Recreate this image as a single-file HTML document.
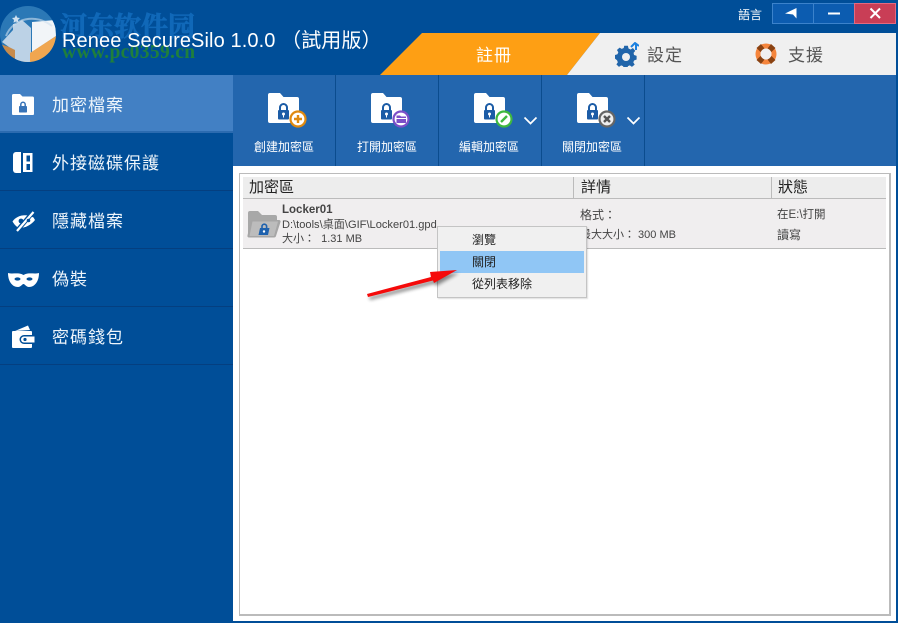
<!DOCTYPE html>
<html><head><meta charset="utf-8">
<style>
html,body{margin:0;padding:0}
body{width:898px;height:623px;overflow:hidden;background:#004e98;position:relative;font-family:"Liberation Sans","Noto Sans CJK TC",sans-serif;}
.a{position:absolute;white-space:nowrap}
.nav{position:absolute;left:0;width:233px;height:57px;border-bottom:1px solid #043f80;color:#fff;}
.nav span{position:absolute;left:52px;top:20px;font-size:17px;line-height:22px;letter-spacing:1px;color:#eef5fb}
.tb{position:absolute;top:139px;font-size:12px;line-height:16px;color:#fff;width:102px;text-align:center}
.sep{position:absolute;top:75px;width:1px;height:91px;background:#0b4c8e}
.t{position:absolute;color:#333;font-size:12px;line-height:14px;white-space:nowrap}
.h{position:absolute;color:#222;font-size:15px;line-height:18px;top:179px}
.m{position:absolute;left:472px;font-size:12px;line-height:16px;color:#222}
</style></head>
<body>
<svg width="0" height="0" style="position:absolute"><defs>
<symbol id="fold" viewBox="0 0 32 32"><path d="M0 2a2 2 0 0 1 2-2h10l3.500 4H29a2 2 0 0 1 2 2v22a2 2 0 0 1-2 2H2a2 2 0 0 1-2-2z" fill="#fff"/><rect x="10" y="17" width="11" height="9.500" rx="1" fill="#1c5ca6"/><path d="M12 18v-3.500a3.500 3.500 0 0 1 7 0V18" fill="none" stroke="#1c5ca6" stroke-width="2"/><circle cx="15.500" cy="21" r="1.500" fill="#fff"/><rect x="15" y="21" width="1" height="3.500" fill="#fff"/></symbol>
<clipPath id="cc"><circle cx="28" cy="34" r="28"/></clipPath>
</defs></svg>

<!-- title bar -->
<svg class="a" style="left:0;top:0" width="898" height="75">
<g clip-path="url(#cc)">
<rect x="0" y="6" width="56" height="56" fill="#2b78b6"/>
<path d="M0 44 L30 54 L30 62 L0 62Z" fill="#c78b4c"/>
<path d="M2 42 L13 30 L13 24 L16 24 L22 20 L31 28 L31 62 L15 62 L15 50 L9 47Z" fill="#bcd2e6"/>
<path d="M32 22 L55 20 L56 36 L32 52Z" fill="#f2f5f8"/>
<path d="M30 53 L56 36 L56 50 L46 62 L30 62Z" fill="#f0a650"/>
<path d="M6 36 C13 18 36 13 52 26" stroke="#cfe0ef" stroke-width="2" fill="none" opacity=".6"/>
<path d="M16 15l1.300 2.600 2.700.4-2 2 .5 2.800-2.500-1.300-2.500 1.300.5-2.800-2-2 2.700-.4z" fill="#cfe0ef"/>
</g>
<path d="M380 75 L422 33 L600 33 L567 75Z" fill="#fe9f14"/>
<path d="M600 33 L896 33 L896 75 L567 75Z" fill="#f0f0f0"/>
</svg>

<div class="a" style="left:60px;top:9px;font:bold 27px/32px 'Noto Serif CJK SC','Liberation Serif',serif;color:#1068b8;-webkit-text-stroke:.7px #1068b8">河东软件园</div>
<div class="a" style="left:62px;top:42px;font:bold 19.500px/22px 'Liberation Serif',serif;color:#1f7f3c;letter-spacing:.35px">www.pc0359.cn</div>
<div class="a" style="left:62px;top:29px;font-size:20px;line-height:24px;color:#fff;letter-spacing:.1px">Renee SecureSilo 1.0.0 （試用版）</div>

<div class="a" style="left:738px;top:7px;font-size:12px;line-height:16px;color:#fff">語言</div>
<svg class="a" style="left:772px;top:3px" width="125" height="21">
<rect x=".5" y=".5" width="41" height="20" fill="#0c5cb0" stroke="#3b82cb"/>
<rect x="41.500" y=".5" width="41" height="20" fill="#0c5cb0" stroke="#3b82cb"/>
<rect x="82.500" y=".5" width="41" height="20" fill="#c93e56" stroke="#e4697f"/>
<path d="M13 10.500 L24.500 5 L24.500 15.500 L21 11.500Z" fill="#fff"/>
<rect x="56" y="9.500" width="12" height="2" fill="#fff"/>
<path d="M98.500 5.500 L108 15 M108 5.500 L98.500 15" stroke="#fff" stroke-width="2"/>
</svg>

<div class="a" style="left:476px;top:45px;font-size:17px;line-height:22px;color:#fff;letter-spacing:1px">註冊</div>
<svg class="a" style="left:615px;top:42px" width="24" height="25" viewBox="0 0 24 25">
<path d="M10 3h4l.7 3 2.300 1 2.500-1.500 2.500 3-1.800 2.300.5 2.200 2.800 1v4l-2.800 1-.8 2 1.500 2.500-3 2.500-2.300-1.700-2.100.8-.5 2.900H9.500l-.7-2.900-2.100-.8-2.400 1.700-2.800-2.800 1.600-2.300-.9-2.100L0 17v-4l2.700-.8.900-2.200-1.500-2.400L5 5l2.300 1.400L9.500 5.500z" fill="#2165aa" transform="translate(0 1) scale(.92)"/>
<circle cx="11" cy="15" r="4" fill="#f0f0f0"/>
<path d="M16 5 L20 1 L24 4 M21 2 L21 8" stroke="#1a80e0" stroke-width="2" fill="none"/>
</svg>
<div class="a" style="left:647px;top:45px;font-size:17px;line-height:22px;color:#555;letter-spacing:1px">設定</div>
<svg class="a" style="left:755px;top:43px" width="22" height="22" viewBox="0 0 22 22">
<circle cx="11" cy="11" r="8" fill="none" stroke="#f5853c" stroke-width="5"/>
<g fill="#8a4212"><path d="M1.500 5 L6 1 L9.500 5.500 L5.500 9Z"/><path d="M20.500 5 L16 1 L12.500 5.500 L16.500 9Z"/><path d="M1.500 17 L6 21 L9.500 16.500 L5.500 13Z"/><path d="M20.500 17 L16 21 L12.500 16.500 L16.500 13Z"/></g>
<circle cx="11" cy="11" r="5.500" fill="#f0f0f0"/>
</svg>
<div class="a" style="left:788px;top:45px;font-size:17px;line-height:22px;color:#555;letter-spacing:1px">支援</div>

<!-- sidebar -->
<div class="nav" style="top:75px;background:#4280c4;border-bottom:2px solid #2b6bb0;height:56px"><span>加密檔案</span></div>
<div class="nav" style="top:133px"><span>外接磁碟保護</span></div>
<div class="nav" style="top:191px"><span>隱藏檔案</span></div>
<div class="nav" style="top:249px"><span>偽裝</span></div>
<div class="nav" style="top:307px"><span>密碼錢包</span></div>

<svg class="a" style="left:10px;top:90px" width="26" height="26" viewBox="0 0 26 26">
<path d="M2 5.500A1.500 1.500 0 0 1 3.500 4H10l2.500 2.500H22.500A1.500 1.500 0 0 1 24 8v16a1 1 0 0 1-1 1H3a1 1 0 0 1-1-1z" fill="#fff"/>
<rect x="9" y="16" width="8" height="6.500" rx=".8" fill="#3874b8"/>
<path d="M10.800 17v-2.500a2.200 2.200 0 0 1 4.400 0V17" fill="none" stroke="#3874b8" stroke-width="1.500"/>
</svg>
<svg class="a" style="left:12px;top:150px" width="22" height="24" viewBox="0 0 22 24">
<path d="M1 5a3 3 0 0 1 3-3h5v21H4a3 3 0 0 1-3-3z" fill="#fff"/>
<path d="M11 3h9.500v19H11zM14.500 5.500v6h3.500v-6zM14.500 14v6h3.500v-6z" fill="#fff" fill-rule="evenodd"/>
</svg>
<svg class="a" style="left:11px;top:210px" width="25" height="22" viewBox="0 0 25 22">
<path d="M1.500 11.500 C6 5 15 3.500 22.500 7.500 L24 10 C20 15.500 12 19 7 17.500 C4.500 16 3 14 1.500 11.500Z" fill="#fff"/>
<path d="M5 22 L23 1" stroke="#004e98" stroke-width="4.500"/>
<path d="M6 21 L22.500 2" stroke="#fff" stroke-width="2.200"/>
<circle cx="10" cy="11" r="2.400" fill="#004e98"/>
<circle cx="17.500" cy="10.500" r="1.800" fill="#004e98"/>
</svg>
<svg class="a" style="left:8px;top:272px" width="31" height="15" viewBox="0 0 31 15">
<path d="M0 1 C5 2.500 10 0 15.500 3 C21 0 26 2.500 31 1 C31 9 27 15 21 15 C18 15 17 12 15.500 12 C14 12 13 15 10 15 C4 15 0 9 0 1Z" fill="#fff"/>
<ellipse cx="9.500" cy="7" rx="3" ry="1.600" fill="#004e98"/><ellipse cx="21.500" cy="7" rx="3" ry="1.600" fill="#004e98"/>
</svg>
<svg class="a" style="left:12px;top:325px" width="23" height="23" viewBox="0 0 23 23">
<path d="M3 6 L16 .5 L18 5Z" fill="#fff"/>
<path d="M0 7a1 1 0 0 1 1-1h18a1 1 0 0 1 1 1v3H12a4.500 4.500 0 0 0 0 9h8v3a1 1 0 0 1-1 1H1a1 1 0 0 1-1-1z" fill="#fff"/>
<path d="M12 11.500h10.500v6H12a3 3 0 0 1 0-6z" fill="#fff"/>
<circle cx="13" cy="14.500" r="1.600" fill="#004e98"/>
</svg>

<!-- toolbar -->
<div class="a" style="left:233px;top:75px;width:663px;height:91px;background:#2366ae"></div>
<div class="sep" style="left:335px"></div>
<div class="sep" style="left:438px"></div>
<div class="sep" style="left:541px"></div>
<div class="sep" style="left:644px"></div>

<svg class="a" style="left:268px;top:93px" width="40" height="36"><use href="#fold" width="32" height="32"/>
<circle cx="30" cy="26" r="7.500" fill="#fff" stroke="#e08a10" stroke-width="2.200"/><path d="M26 26h8M30 22v8" stroke="#e08a10" stroke-width="2.400"/></svg>
<svg class="a" style="left:371px;top:93px" width="40" height="36"><use href="#fold" width="32" height="32"/>
<circle cx="30" cy="26" r="7.500" fill="#fff" stroke="#7c4fc8" stroke-width="2.200"/><path d="M25.500 22.500h3.500l1 1h5v1.500h-9.500zM25.500 26h9.500v4h-9.500z" fill="#7c4fc8"/></svg>
<svg class="a" style="left:474px;top:93px" width="40" height="36"><use href="#fold" width="32" height="32"/>
<circle cx="30" cy="26" r="7.500" fill="#fff" stroke="#3fb83f" stroke-width="2.200"/><path d="M27 29 L33 23" stroke="#3fb83f" stroke-width="2.400"/></svg>
<svg class="a" style="left:577px;top:93px" width="40" height="36"><use href="#fold" width="32" height="32"/>
<circle cx="30" cy="26" r="7.500" fill="#eee" stroke="#666" stroke-width="2.200"/><path d="M27 23 L33 29 M33 23 L27 29" stroke="#555" stroke-width="2.400"/></svg>
<svg class="a" style="left:523px;top:116px" width="16" height="10"><path d="M1.500 1.500 L7.500 7.500 L13.500 1.500" fill="none" stroke="#fff" stroke-width="1.700"/></svg>
<svg class="a" style="left:626px;top:116px" width="16" height="10"><path d="M1.500 1.500 L7.500 7.500 L13.500 1.500" fill="none" stroke="#fff" stroke-width="1.700"/></svg>

<div class="tb" style="left:233px">創建加密區</div>
<div class="tb" style="left:336px">打開加密區</div>
<div class="tb" style="left:438px">編輯加密區</div>
<div class="tb" style="left:541px">關閉加密區</div>

<!-- content -->
<div class="a" style="left:233px;top:166px;width:663px;height:455px;background:#fff"></div>
<div class="a" style="left:239px;top:173px;width:649px;height:440px;border:1px solid #bbb;border-width:1px 2px 2px 1px;background:#fff"></div>
<div class="a" style="left:243px;top:177px;width:643px;height:21px;background:#ededed;border-bottom:1px solid #bbb"></div>
<div class="a" style="left:243px;top:199px;width:643px;height:49px;background:#f0eeef;border-bottom:1px solid #bbb"></div>
<div class="a" style="left:573px;top:177px;width:1px;height:21px;background:#bbb"></div>
<div class="a" style="left:771px;top:177px;width:1px;height:21px;background:#bbb"></div>

<div class="h" style="left:249px">加密區</div>
<div class="h" style="left:581px">詳情</div>
<div class="h" style="left:778px">狀態</div>

<svg class="a" style="left:247px;top:210px" width="34" height="29" viewBox="0 0 34 29">
<path d="M1 3a2 2 0 0 1 2-2h8l4 4h13a2 2 0 0 1 2 2v4H1z" fill="#a8a8a8"/>
<rect x="1" y="8" width="6" height="16" fill="#a8a8a8"/>
<path d="M5 10h27a1.500 1.500 0 0 1 1.500 2L29 26a2 2 0 0 1-2 1.500H2a1.500 1.500 0 0 1-1.500-2L3.500 11a1.500 1.500 0 0 1 1.500-1z" fill="#a6a6a6"/>
<path d="M5.500 11.500h25.500L27 26H2.500z" fill="#bcbcbc"/>
<path d="M13 18h9.500l-1.500 7H11.500z" fill="#1f62ae"/>
<path d="M15 18v-1.500a2.300 2.300 0 0 1 4.600 0V18" fill="none" stroke="#1f62ae" stroke-width="1.600"/>
<circle cx="17" cy="21.500" r="1.200" fill="#fff"/>
</svg>
<div class="t" style="left:282px;top:203px;font-weight:bold;font-size:11.500px;color:#444">Locker01</div>
<div class="t" style="left:282px;top:218px;font-size:11.100px;color:#444">D:\tools\桌面\GIF\Locker01.gpd</div>
<div class="t" style="left:282px;top:232px;font-size:11px;color:#444">大小：&nbsp; 1.31 MB</div>
<div class="t" style="left:580px;top:208px;color:#444">格式：</div>
<div class="t" style="left:580px;top:228px;font-size:11px;color:#444">最大大小：&nbsp;300 MB</div>
<div class="t" style="left:777px;top:208px;font-size:11.500px;color:#444">在E:\打開</div>
<div class="t" style="left:777px;top:228px;color:#444">讀寫</div>

<!-- context menu -->
<div class="a" style="left:437px;top:226px;width:148px;height:70px;background:#f0f0f0;border:1px solid #c4c4c4;box-shadow:1px 1px 1px rgba(0,0,0,.12)"></div>
<div class="a" style="left:440px;top:251px;width:144px;height:22px;background:#90c6f5"></div>
<div class="m" style="top:232px">瀏覽</div>
<div class="m" style="top:254px">關閉</div>
<div class="m" style="top:276px">從列表移除</div>

<svg class="a" style="left:360px;top:262px" width="105" height="42">
<defs><filter id="sh"><feGaussianBlur stdDeviation="1.800"/></filter></defs>
<path d="M7 32 L71 15 L70 10 L97 8 L74 21 L73 18.500 L8 35Z" fill="#000" opacity=".45" filter="url(#sh)" transform="translate(2 3)"/>
<path d="M7 32 L71 15 L70 10 L97 8 L74 21 L73 18.500 L8 35Z" fill="#f50a0a"/>
</svg>
</body></html>
